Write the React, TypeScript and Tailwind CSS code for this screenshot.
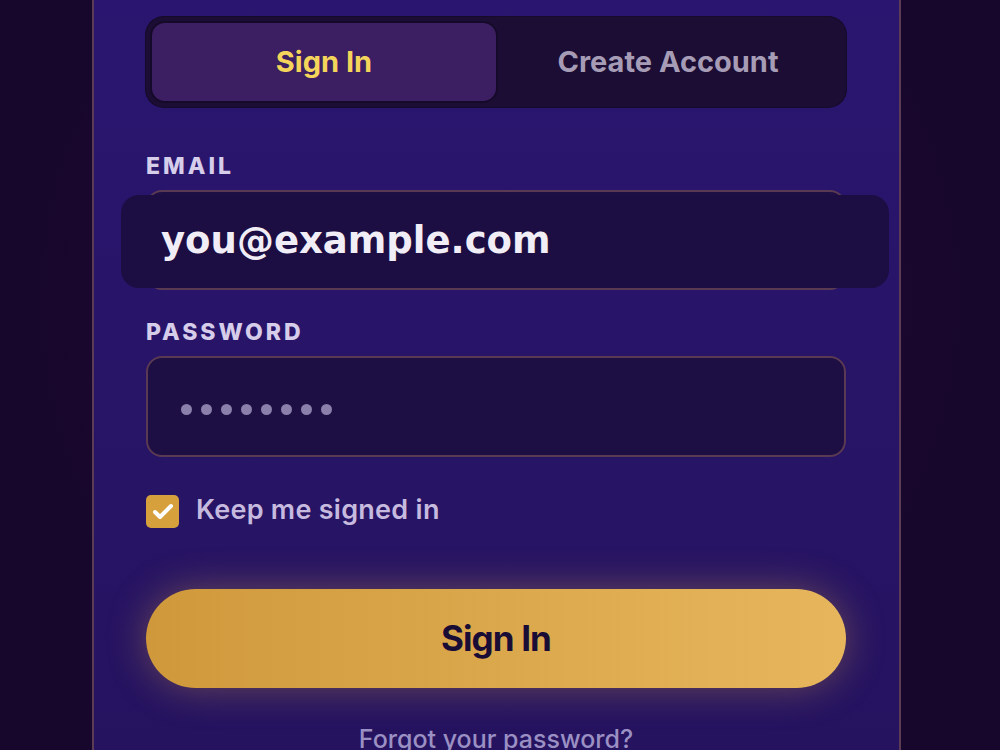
import { Check } from "lucide-react";

const SignInCard = () => {
  return (
    <div className="h-[750px] overflow-hidden bg-[#1a0830] bg-[radial-gradient(circle_at_50%_40%,#22093d_0%,#18072c_70%)] flex font-['Inter',sans-serif]">
      <div className="ml-[92px] w-[809px] -mt-8 h-[820px] shrink-0 border-2 border-[#5c3b55] bg-gradient-to-b from-[#2a1670] to-[#25135f] pl-[52px] pr-[53px] pt-[47px]">
        {/* Tabs */}
        <div className="flex h-[90px] rounded-[18px] bg-[#1b0d33] p-[6px] ring-1 ring-[#150a28]">
          <button className="flex-1 rounded-[13px] bg-[#3b1f62] text-[29px] font-bold text-[#f4d45a] shadow-[0_0_0_2px_#160a2a]">
            Sign In
          </button>
          <button className="flex-1 text-[29px] font-bold text-[#a69cb6]">Create Account</button>
        </div>

        {/* Email */}
        <div className="mt-[44px] text-[23px] font-extrabold tracking-[0.13em] text-[#d6cdea] leading-[30px]">
          EMAIL
        </div>
        <div className="relative mt-[9px] h-[100px] rounded-[16px] border-2 border-[#5a3a52] bg-[#1d0e44]">
          <div className="absolute left-[-27px] right-[-45px] top-[3px] bottom-[0px] rounded-[18px] bg-[#1c0d42] flex items-center pl-[40px]">
            <span className="font-['DejaVu_Sans',sans-serif] font-bold text-[37px] text-[#f1edf6] leading-none -mt-[3px]">
              you@example.com
            </span>
          </div>
        </div>

        {/* Password */}
        <div className="mt-[27px] text-[23px] font-extrabold tracking-[0.13em] text-[#d6cdea] leading-[30px]">
          PASSWORD
        </div>
        <div className="mt-[9px] h-[101px] rounded-[16px] border-2 border-[#5a3a52] bg-[#1d0e44] flex items-center gap-[9px] pl-[33px]">
          {[0, 1, 2, 3, 4, 5, 6, 7].map((i) => (
            <span key={i} className="block mt-[5px] w-[11px] h-[11px] rounded-full bg-[#8b80ab]" />
          ))}
        </div>

        {/* Remember */}
        <div className="mt-[36px] flex items-center gap-[17px]">
          <div className="w-[33px] h-[33px] rounded-[5px] bg-[#d6a13d] flex items-center justify-center">
            <Check className="w-[24px] h-[24px] text-white" strokeWidth={4} />
          </div>
          <span className="text-[27px] font-semibold tracking-[0.01em] text-[#c6badf] -mt-[3px]">Keep me signed in</span>
        </div>

        {/* Submit */}
        <button className="mt-[58px] w-full h-[99px] rounded-full bg-gradient-to-r from-[#cf993b] to-[#e7b65c] text-[35px] font-bold tracking-tight text-[#1a0d35] shadow-[0_0_38px_rgba(230,170,70,0.35)]">
          Sign In
        </button>

        <div className="mt-[33px] text-center text-[25px] font-medium text-[#9b90c3]">Forgot your password?</div>
      </div>
    </div>
  );
};

export default function App() {
  return <SignInCard />;
}
